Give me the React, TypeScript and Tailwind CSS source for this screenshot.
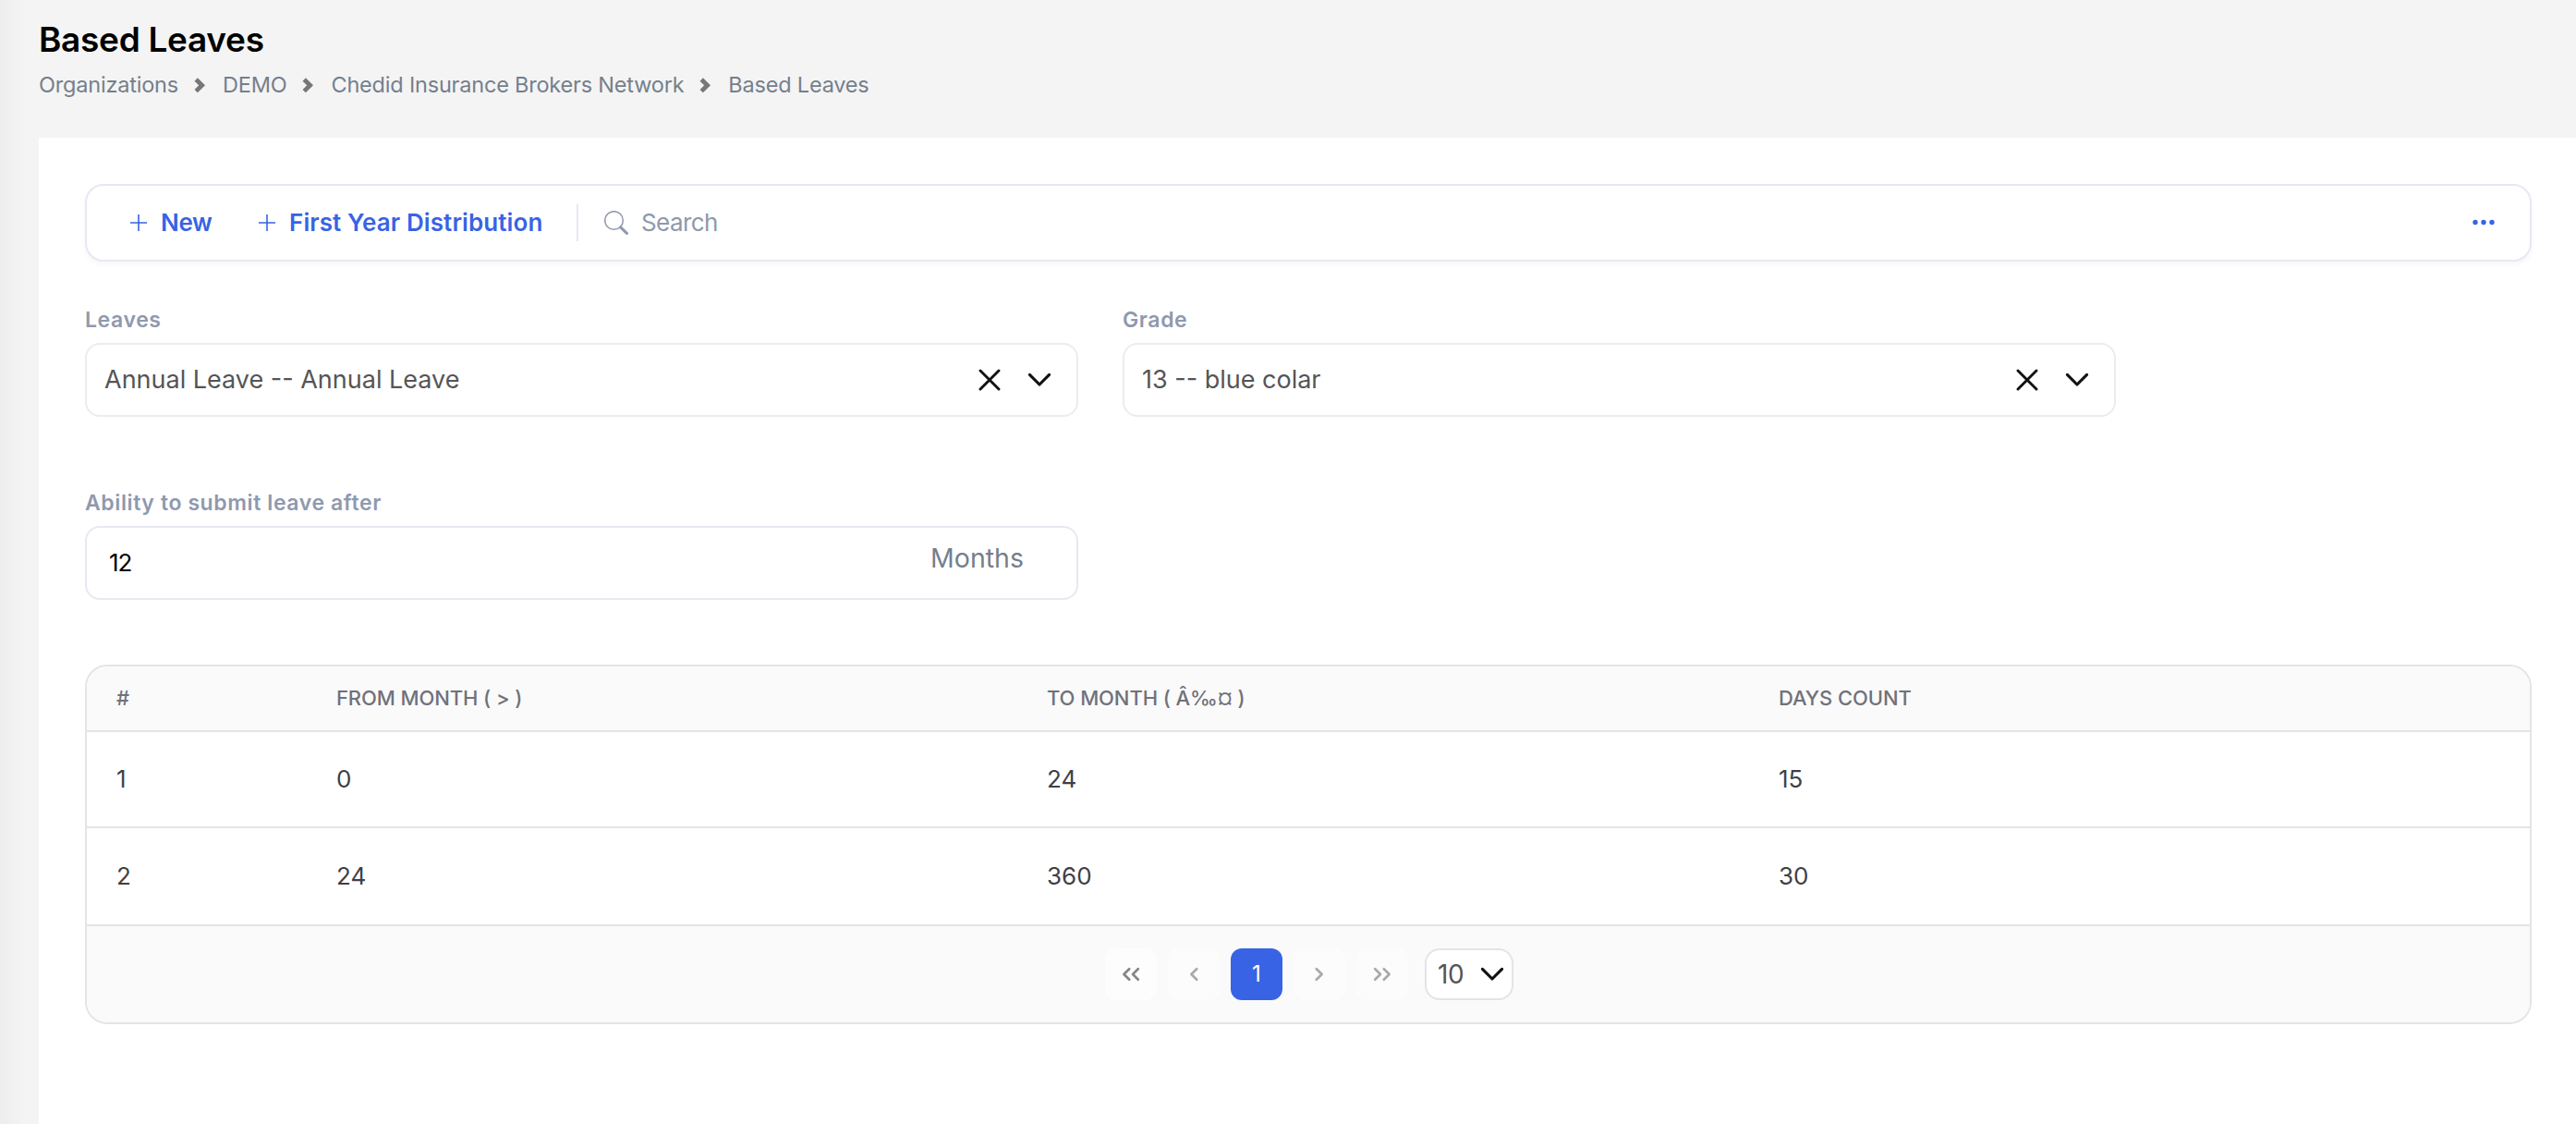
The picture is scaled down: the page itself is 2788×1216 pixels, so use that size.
import { Fragment, useState } from "react";

type Row = { id: number; from: number; to: number; days: number };

const crumbs = ["Organizations", "DEMO", "Chedid Insurance Brokers Network", "Based Leaves"];

const rows: Row[] = [
  { id: 1, from: 0, to: 24, days: 15 },
  { id: 2, from: 24, to: 360, days: 30 },
];

const columns = "grid grid-cols-[238px_769px_792px_1fr] items-center pl-8";

function CrumbChevron() {
  return (
    <svg className="ml-4 mr-4 h-5 w-4" viewBox="0 0 16 20" fill="none">
      <path d="M3.2 4 9.6 10.3 3.2 16.6" stroke="#777777" strokeWidth="4.8" />
    </svg>
  );
}

function PlusIcon() {
  return (
    <svg className="mr-[15px] h-[18px] w-[18px]" viewBox="0 0 18 18" fill="none">
      <path d="M9 0v18M0 9h18" stroke="#3863e4" strokeWidth="1.6" />
    </svg>
  );
}

function SearchIcon() {
  return (
    <svg className="mr-3.5 h-[26px] w-[26px]" viewBox="0 0 26 26" fill="none" stroke="#8e99ab">
      <circle cx="10.5" cy="10.5" r="9.8" strokeWidth="1.5" />
      <path d="M17.6 17.8 24.4 24.4" strokeWidth="3" strokeLinecap="round" />
    </svg>
  );
}

function ClearIcon() {
  return (
    <svg className="h-6 w-6" viewBox="0 0 24 24" fill="none">
      <path d="M2 2 22 22M22 2 2 22" stroke="#111111" strokeWidth="2.9" strokeLinecap="round" />
    </svg>
  );
}

function DownIcon() {
  return (
    <svg className="h-4 w-[26px]" viewBox="0 0 26 16" fill="none">
      <path
        d="M2.4 2.4 13 13 23.6 2.4"
        stroke="#111111"
        strokeWidth="3.1"
        strokeLinecap="round"
        strokeLinejoin="round"
      />
    </svg>
  );
}

function PageArrow({ double, flip, color }: { double?: boolean; flip?: boolean; color: string }) {
  return (
    <svg
      className={`h-4 ${double ? "w-5" : "w-[10px]"} ${flip ? "-scale-x-100" : ""}`}
      viewBox={double ? "0 0 20 16" : "0 0 10 16"}
      fill="none"
      stroke={color}
      strokeWidth="2.7"
      strokeLinecap="round"
      strokeLinejoin="round"
    >
      <path d="M8.2 2.2 2.4 8l5.8 5.8" />
      {double ? <path d="M17.8 2.2 12 8l5.8 5.8" /> : null}
    </svg>
  );
}

function FieldLabel({ children }: { children: string }) {
  return (
    <label className="mb-2.5 flex h-[30px] items-center text-[23px] font-semibold tracking-[0.6px] text-[#8f99ae]">
      {children}
    </label>
  );
}

function SelectField({ label, value }: { label: string; value: string }) {
  return (
    <div className="w-[1075px]">
      <FieldLabel>{label}</FieldLabel>
      <div className="flex h-20 items-center rounded-2xl border-2 border-[#ececec] bg-white pl-[19px] pr-[27px]">
        <span className="flex-1 text-[27px] text-[#555555]">{value}</span>
        <button type="button" className="mr-[29px]">
          <ClearIcon />
        </button>
        <button type="button">
          <DownIcon />
        </button>
      </div>
    </div>
  );
}

export default function App() {
  const [months, setMonths] = useState("12");

  return (
    <div className="flex h-[1216px] w-full flex-col overflow-hidden bg-[linear-gradient(to_right,#ededed_0px,#f4f4f4_26px)] font-['Inter',sans-serif]">
      <header className="h-[149px] shrink-0 pl-[42px] pt-[22px]">
        <h1 className="flex h-[41px] items-center text-[37px] font-semibold tracking-[-0.3px] text-black">
          Based Leaves
        </h1>
        <nav className="mt-3.5 flex h-[29px] items-center text-[23.5px] tracking-[-0.2px] text-[#747f8c]">
          {crumbs.map((crumb, i) => (
            <Fragment key={crumb}>
              {i > 0 ? <CrumbChevron /> : null}
              <span>{crumb}</span>
            </Fragment>
          ))}
        </nav>
      </header>

      <main className="ml-[42px] flex-1 bg-white pl-[50px] pr-12 pt-[50px]">
        <div className="flex h-[84px] items-center rounded-[20px] border-2 border-[#e5e9f1] pb-px pl-[47px] pr-[38px] shadow-[0_4px_6px_rgba(0,0,0,0.03)]">
          <button
            type="button"
            className="flex w-[139px] items-center text-[26px] font-semibold tracking-[-0.3px] text-[#3863e4]"
          >
            <PlusIcon />
            New
          </button>
          <button
            type="button"
            className="flex w-[344px] items-center text-[26px] font-semibold tracking-[0.1px] text-[#3863e4]"
          >
            <PlusIcon />
            First Year Distribution
          </button>
          <div className="mr-7 h-10 w-0.5 bg-[#e5e9f1]" />
          <div className="flex flex-1 items-center text-[26px] tracking-[-0.6px] text-[#8e99ab]">
            <SearchIcon />
            Search
          </div>
          <button type="button">
            <svg className="h-6 w-6" viewBox="0 0 24 24" fill="#3863e4">
              <circle cx="3" cy="11.5" r="2.7" />
              <circle cx="12" cy="11.5" r="2.7" />
              <circle cx="21" cy="11.5" r="2.7" />
            </svg>
          </button>
        </div>

        <div className="mt-12 flex gap-12">
          <SelectField label="Leaves" value="Annual Leave -- Annual Leave" />
          <SelectField label="Grade" value="13 -- blue colar" />
        </div>

        <div className="mt-[78px] w-[1075px]">
          <FieldLabel>Ability to submit leave after</FieldLabel>
          <div className="flex h-20 items-center rounded-2xl border-2 border-[#e6e9f1] pl-6 pr-[57px]">
            <input
              value={months}
              onChange={(event) => setMonths(event.target.value)}
              className="min-w-0 flex-1 pb-0.5 text-[26px] tracking-[-1px] text-black outline-none"
            />
            <span className="pb-[11px] text-[28.5px] leading-10 text-[#747f8c]">Months</span>
          </div>
        </div>

        <div className="mt-[70px] overflow-hidden rounded-3xl border-2 border-[#e4e4e4]">
          <div
            className={`${columns} h-[71px] border-b-2 border-[#e4e4e4] bg-[#fafafa] text-[22px] font-medium tracking-[-0.1px] text-[#71717a]`}
          >
            <span>#</span>
            <span>FROM MONTH ( &gt; )</span>
            <span>TO MONTH ( Â‰¤ )</span>
            <span>DAYS COUNT</span>
          </div>
          <div className="divide-y-2 divide-[#e4e4e4] border-b-2 border-[#e4e4e4] text-[26px] text-[#3f3f46]">
            {rows.map((row) => (
              <div key={row.id} className={`${columns} h-[104px] pb-px`}>
                <span>{row.id}</span>
                <span>{row.from}</span>
                <span>{row.to}</span>
                <span>{row.days}</span>
              </div>
            ))}
          </div>
          <div className="flex h-[104px] items-center justify-center gap-3 bg-[#fafafa] pl-0.5">
            <button type="button" className="flex h-14 w-14 items-center justify-center rounded-xl bg-[#fdfdfd]">
              <PageArrow double color="#868686" />
            </button>
            <button type="button" className="flex h-14 w-14 items-center justify-center rounded-xl bg-[#fcfcfc]">
              <PageArrow color="#aaaaaa" />
            </button>
            <button
              type="button"
              className="flex h-14 w-14 items-center justify-center rounded-xl bg-[#3863e4] text-2xl text-white"
            >
              1
            </button>
            <button type="button" className="flex h-14 w-14 items-center justify-center rounded-xl bg-[#fcfcfc]">
              <PageArrow flip color="#aaaaaa" />
            </button>
            <button type="button" className="flex h-14 w-14 items-center justify-center rounded-xl bg-[#fcfcfc]">
              <PageArrow double flip color="#aaaaaa" />
            </button>
            <button
              type="button"
              className="ml-1.5 flex h-14 w-24 items-center justify-between rounded-2xl border-2 border-[#e4e4e4] bg-white pl-3 pr-2 text-[28px] tracking-[-0.5px] text-[#555555]"
            >
              10
              <DownIcon />
            </button>
          </div>
        </div>
      </main>
    </div>
  );
}
